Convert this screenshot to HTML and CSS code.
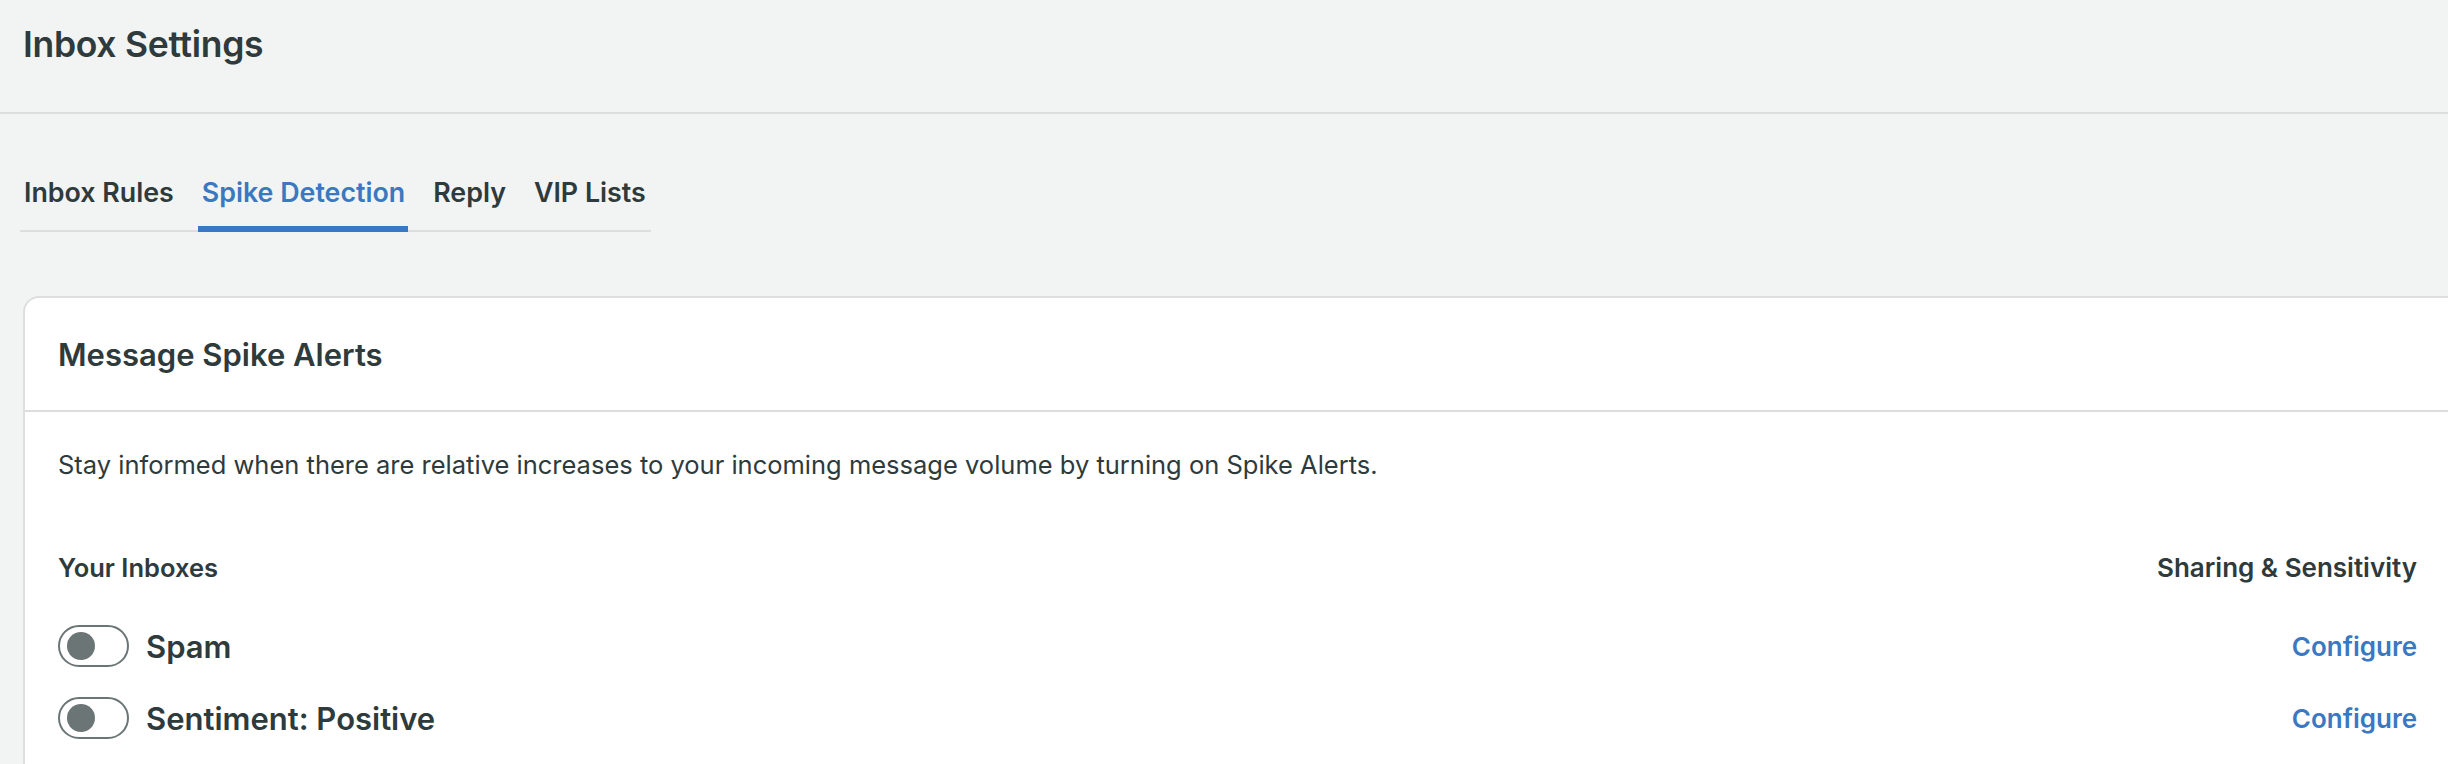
FILE: index.html
```html
<!DOCTYPE html>
<html lang="en">
<head>
<meta charset="utf-8">
<title>Inbox Settings</title>
<link rel="stylesheet" href="styles.css">
</head>
<body>
<header class="page-header">
  <h1 class="page-title">Inbox Settings</h1>
</header>
<nav class="tabs-wrap">
  <div class="tabs">
    <a class="tab">Inbox Rules</a>
    <a class="tab active">Spike Detection</a>
    <a class="tab">Reply</a>
    <a class="tab">VIP Lists</a>
  </div>
</nav>
<section class="card">
  <div class="card-header">
    <h2 class="card-title">Message Spike Alerts</h2>
  </div>
  <div class="card-body">
    <p class="desc">Stay informed when there are relative increases to your incoming message volume by turning on Spike Alerts.</p>
    <div class="list-head">
      <span>Your Inboxes</span>
      <span>Sharing &amp; Sensitivity</span>
    </div>
    <div class="row">
      <div class="row-left"><span class="toggle"><span class="knob"></span></span><span class="row-label">Spam</span></div>
      <a class="configure">Configure</a>
    </div>
    <div class="row">
      <div class="row-left"><span class="toggle"><span class="knob"></span></span><span class="row-label">Sentiment: Positive</span></div>
      <a class="configure">Configure</a>
    </div>
  </div>
</section>
</body>
</html>
```

FILE: styles.css
```css
* { box-sizing: border-box; }
html, body { margin: 0; padding: 0; }
body {
  background: #f2f4f3;
  font-family: Inter, "Noto Sans", sans-serif;
  color: #2e3a3b;
  width: 2448px;
  height: 764px;
  overflow: hidden;
}
.page-header {
  height: 114px;
  border-bottom: 2px solid #dcdedd;
  display: flex;
  align-items: center;
  padding: 0 23px 24px;
}
.page-title {
  margin: 0;
  font-size: 35.5px;
  font-weight: 600;
  letter-spacing: -0.3px;
}
.tabs-wrap {
  padding: 62px 0 0 20px;
}
.tabs {
  display: inline-flex;
  gap: 21px;
  border-bottom: 2px solid #dcdedd;
  padding-right: 2px;
}
.tab {
  font-size: 26.8px;
  font-weight: 600;
  padding: 0 3px 18px 4px;
  margin-bottom: -2px;
  border-bottom: 6px solid transparent;
  color: #2e3a3b;
}
.tab.active {
  color: #3a78c1;
  border-bottom-color: #3a78c1;
}
.card {
  margin: 64px 0 0 23px;
  background: #fff;
  border: 2px solid #dddfde;
  border-right: none;
  border-radius: 16px 0 0 0;
  height: 500px;
}
.card-header {
  height: 114px;
  border-bottom: 2px solid #dcdedd;
  display: flex;
  align-items: center;
  padding: 0 33px;
}
.card-title {
  margin: 0;
  font-size: 31px;
  font-weight: 600;
}
.card-body {
  padding: 0 31px 0 33px;
}
.desc {
  margin: 0;
  padding-top: 37px;
  font-size: 25.5px;
  line-height: 32px;
}
.list-head {
  display: flex;
  justify-content: space-between;
  font-size: 25.5px;
  font-weight: 600;
  margin-top: 72px;
  line-height: 30px;
}
.list-head span:last-child { font-size: 26px; }
.row {
  display: flex;
  justify-content: space-between;
  align-items: center;
  height: 72px;
}
.list-head + .row { margin-top: 27px; }
.row-left {
  display: flex;
  align-items: center;
  gap: 17px;
}
.toggle {
  width: 71px;
  height: 42px;
  border: 2px solid #6b7575;
  border-radius: 21px;
  display: flex;
  align-items: center;
  padding-left: 7px;
}
.knob {
  width: 28px;
  height: 28px;
  border-radius: 50%;
  background: #6b7575;
}
.row-label {
  font-size: 31px;
  font-weight: 600;
}
.configure {
  font-size: 26px;
  font-weight: 600;
  color: #3a78c1;
}
```
